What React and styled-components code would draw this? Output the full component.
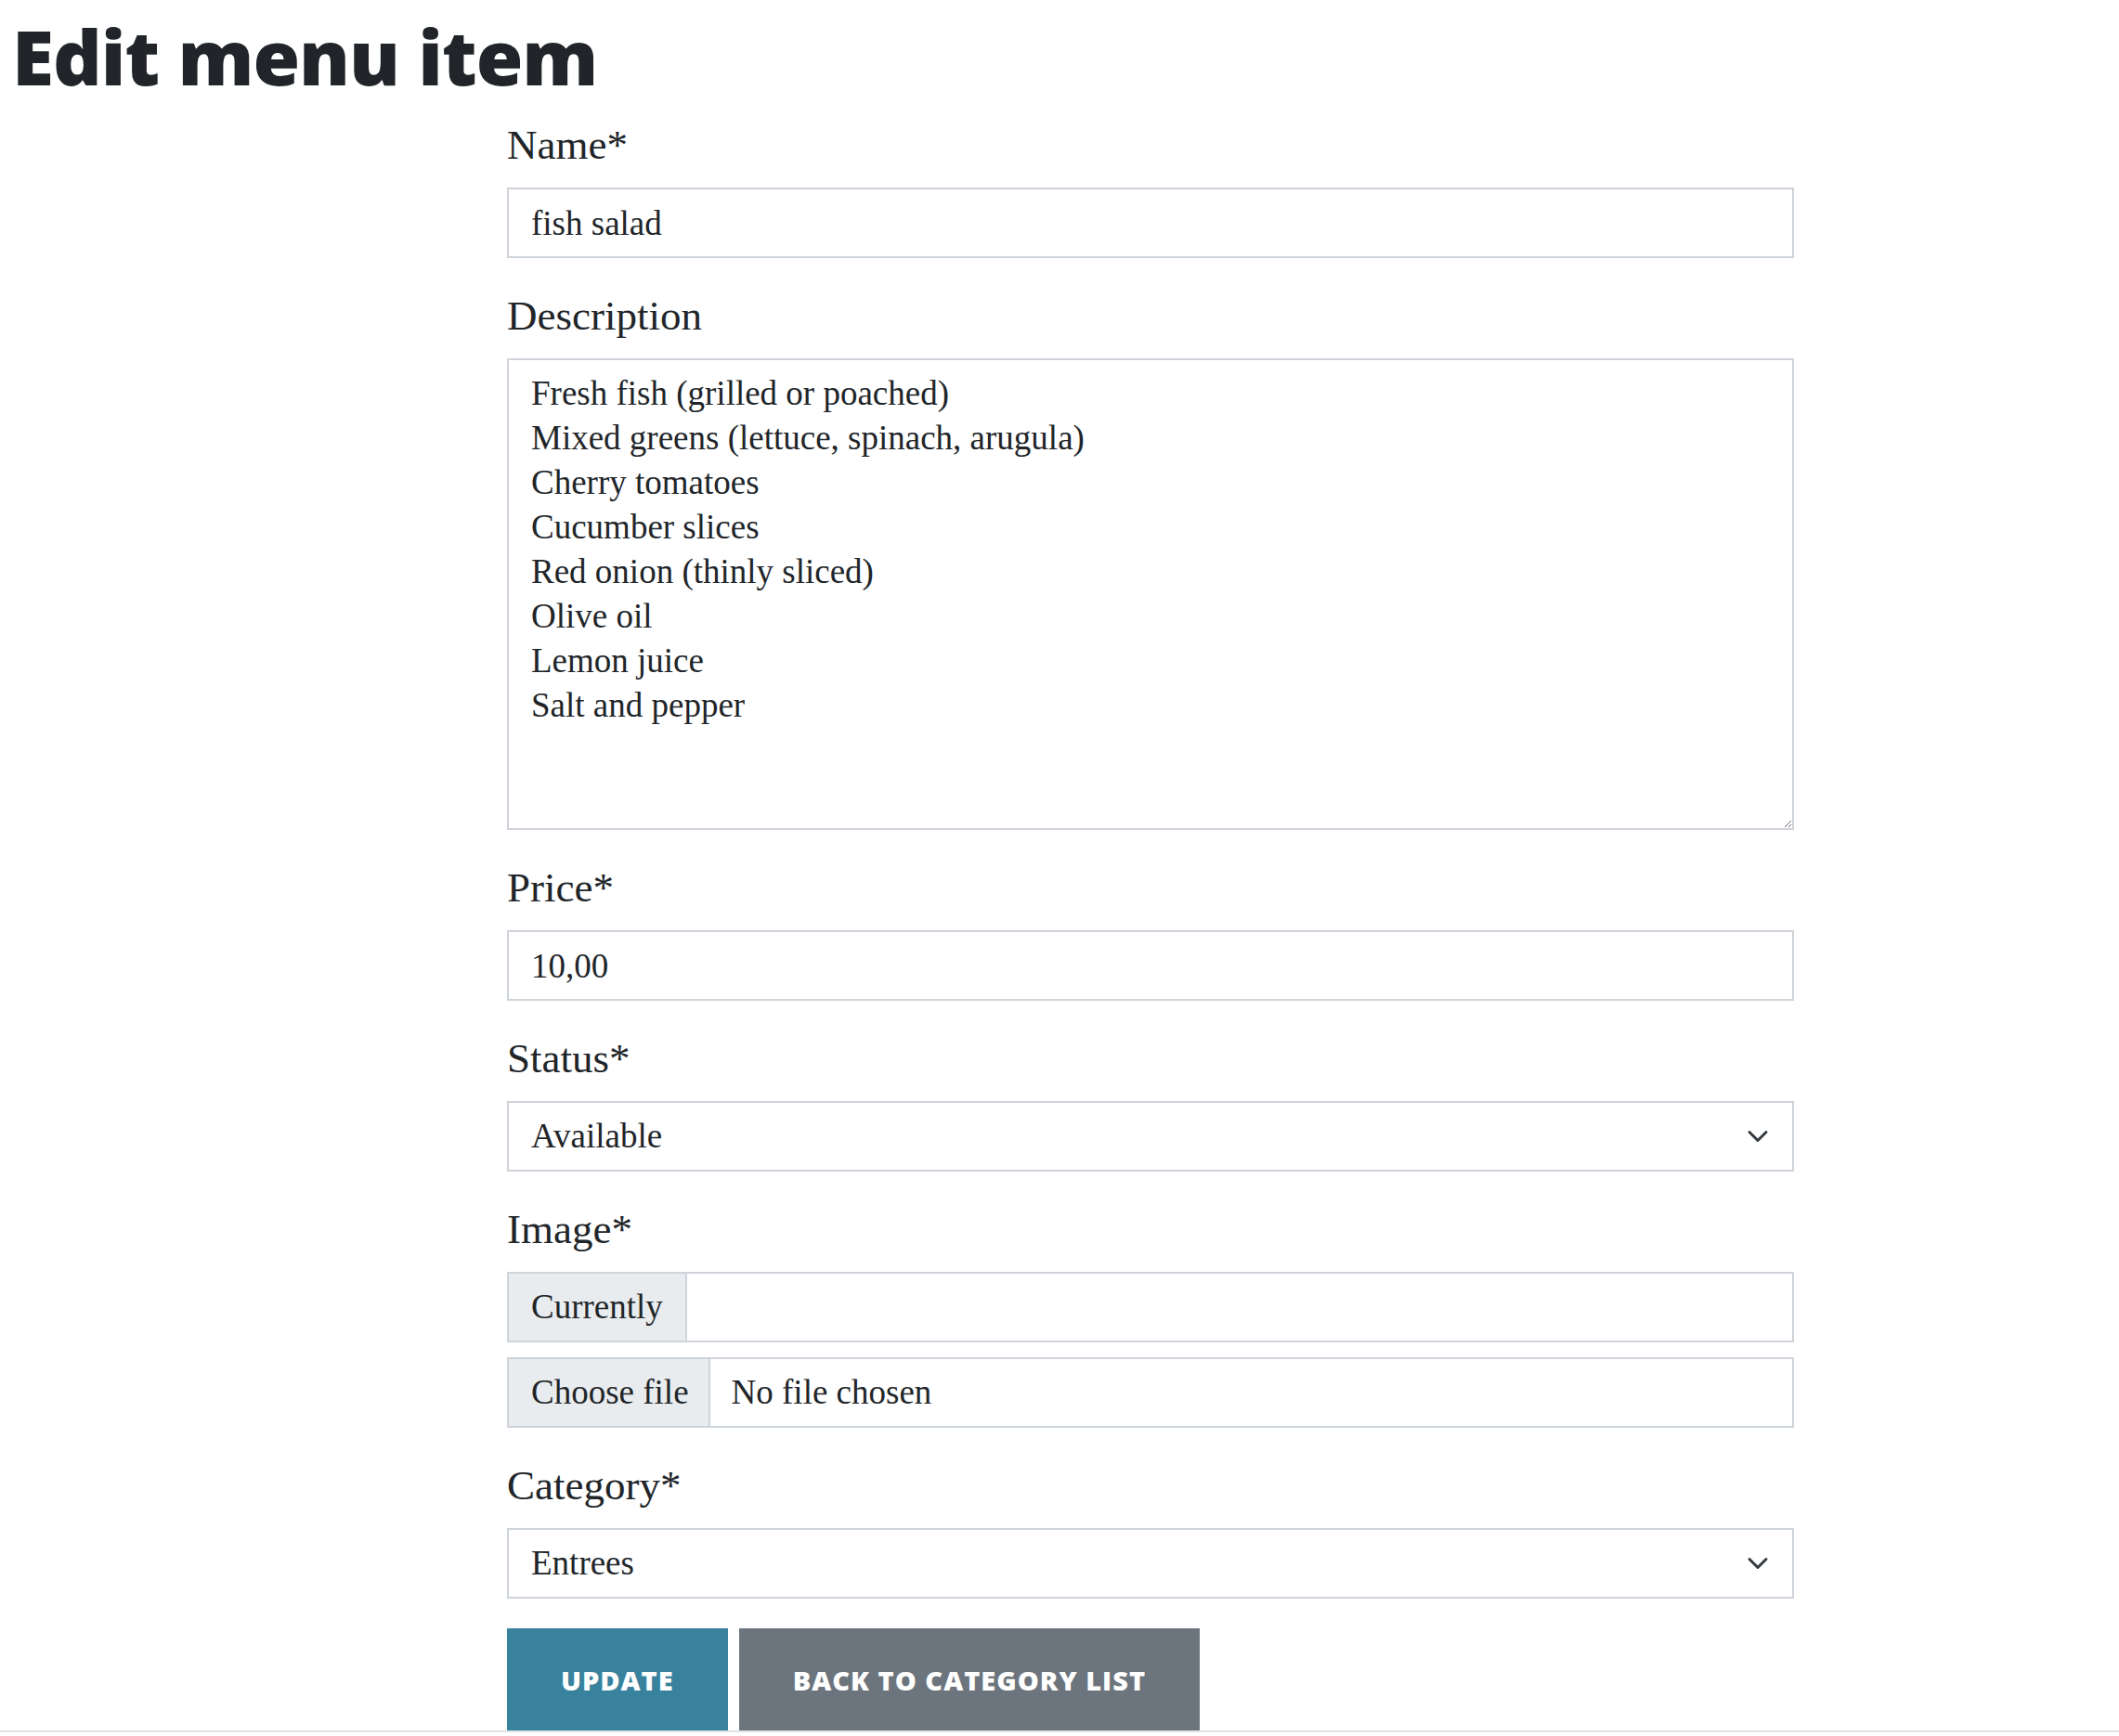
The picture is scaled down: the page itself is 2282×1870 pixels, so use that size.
import React from "react";
import styled, { createGlobalStyle } from "styled-components";

const GlobalStyle = createGlobalStyle`
  html, body { margin: 0; padding: 0; background: #ffffff; }
  body {
    font-family: "Liberation Serif", "DejaVu Serif", serif;
    color: #212529;
  }
  *, *::before, *::after { box-sizing: border-box; }
`;

const Page = styled.main`
  display: flex;
  flex-direction: column;
  padding-top: 10px;
`;

const Title = styled.h1`
  margin: 0 0 16px 0;
  padding-left: 13px;
  font-family: "Open Sans", "DejaVu Sans", sans-serif;
  font-weight: 800;
  font-size: 82px;
  letter-spacing: -1px;
  line-height: 100px;
  color: #212529;
`;

const Form = styled.form`
  width: 1386px;
  margin-left: 546px;
  display: flex;
  flex-direction: column;
`;

const Field = styled.div`
  display: flex;
  flex-direction: column;
  margin-bottom: 32px;
`;

const Label = styled.label`
  font-size: 45px;
  line-height: 60px;
  margin-bottom: 16px;
  color: #212529;
`;

const controlBase = `
  display: block;
  width: 100%;
  font-family: "Liberation Serif", "DejaVu Serif", serif;
  font-size: 37px;
  line-height: 48px;
  color: #212529;
  background-color: #ffffff;
  border: 2px solid #ced4da;
  border-radius: 0;
  outline: none;
  margin: 0;
`;

const TextInput = styled.input`
  ${controlBase}
  height: 76px;
  padding: 12px 24px;
`;

const TextArea = styled.textarea`
  ${controlBase}
  height: 508px;
  padding: 12px 24px;
  resize: vertical;
`;

const chevron =
  "data:image/svg+xml,%3csvg xmlns='http://www.w3.org/2000/svg' viewBox='0 0 16 16'%3e%3cpath fill='none' stroke='%23343a40' stroke-linecap='round' stroke-linejoin='round' stroke-width='2' d='m2 5 6 6 6-6'/%3e%3c/svg%3e";

const Select = styled.select`
  ${controlBase}
  height: 76px;
  padding: 12px 72px 12px 24px;
  appearance: none;
  -webkit-appearance: none;
  background-image: url("${chevron}");
  background-repeat: no-repeat;
  background-position: right 21px center;
  background-size: 32px 24px;
`;

const GroupStack = styled.div`
  display: flex;
  flex-direction: column;
  gap: 16px;
`;

const InputGroup = styled.div`
  display: flex;
  align-items: stretch;
  width: 100%;
  height: 76px;
  border: 2px solid #ced4da;
  background: #ffffff;
  font-size: 37px;
  line-height: 48px;
  color: #212529;
`;

const Addon = styled.span`
  display: flex;
  align-items: center;
  padding: 0 ${(p) => (p.$tight ? "21px" : "24px")} 0 24px;
  background-color: #e9ecef;
  border-right: 2px solid #ced4da;
  white-space: nowrap;
`;

const FileControl = styled.label`
  display: flex;
  align-items: stretch;
  width: 100%;
  height: 76px;
  border: 2px solid #ced4da;
  background: #ffffff;
  font-size: 37px;
  line-height: 48px;
  color: #212529;
  cursor: pointer;
`;

const HiddenFile = styled.input`
  display: none;
`;

const FileName = styled.span`
  display: flex;
  align-items: center;
  padding-left: 23px;
  white-space: nowrap;
`;

const Actions = styled.div`
  display: flex;
  gap: 12px;
`;

const Button = styled.button`
  font-family: "Open Sans", "DejaVu Sans", sans-serif;
  font-weight: 800;
  font-size: 29px;
  line-height: 43px;
  letter-spacing: 1px;
  text-transform: uppercase;
  color: #ffffff;
  border: 0;
  border-radius: 0;
  padding: 34px 58px 33px;
  background-color: ${(p) => (p.$variant === "primary" ? "#38829e" : "#6c757d")};
  cursor: pointer;
`;

const Footer = styled.footer`
  border-top: 2px solid #dee2e6;
  height: 40px;
`;

const description = `Fresh fish (grilled or poached)
Mixed greens (lettuce, spinach, arugula)
Cherry tomatoes
Cucumber slices
Red onion (thinly sliced)
Olive oil
Lemon juice
Salt and pepper`;

export default function App() {
  return (
    <>
      <GlobalStyle />
      <Page>
        <Title>Edit menu item</Title>
        <Form onSubmit={(e) => e.preventDefault()}>
          <Field>
            <Label htmlFor="name">Name*</Label>
            <TextInput id="name" type="text" defaultValue="fish salad" />
          </Field>
          <Field>
            <Label htmlFor="description">Description</Label>
            <TextArea id="description" rows={10} defaultValue={description} />
          </Field>
          <Field>
            <Label htmlFor="price">Price*</Label>
            <TextInput id="price" type="text" defaultValue="10,00" />
          </Field>
          <Field>
            <Label htmlFor="status">Status*</Label>
            <Select id="status" defaultValue="available">
              <option value="available">Available</option>
              <option value="unavailable">Unavailable</option>
            </Select>
          </Field>
          <Field>
            <Label htmlFor="image">Image*</Label>
            <GroupStack>
              <InputGroup>
                <Addon>Currently</Addon>
              </InputGroup>
              <FileControl>
                <HiddenFile id="image" type="file" />
                <Addon $tight>Choose file</Addon>
                <FileName>No file chosen</FileName>
              </FileControl>
            </GroupStack>
          </Field>
          <Field>
            <Label htmlFor="category">Category*</Label>
            <Select id="category" defaultValue="entrees">
              <option value="entrees">Entrees</option>
              <option value="desserts">Desserts</option>
            </Select>
          </Field>
          <Actions>
            <Button type="submit" $variant="primary">Update</Button>
            <Button type="button" $variant="secondary">Back to category list</Button>
          </Actions>
        </Form>
      </Page>
      <Footer />
    </>
  );
}
